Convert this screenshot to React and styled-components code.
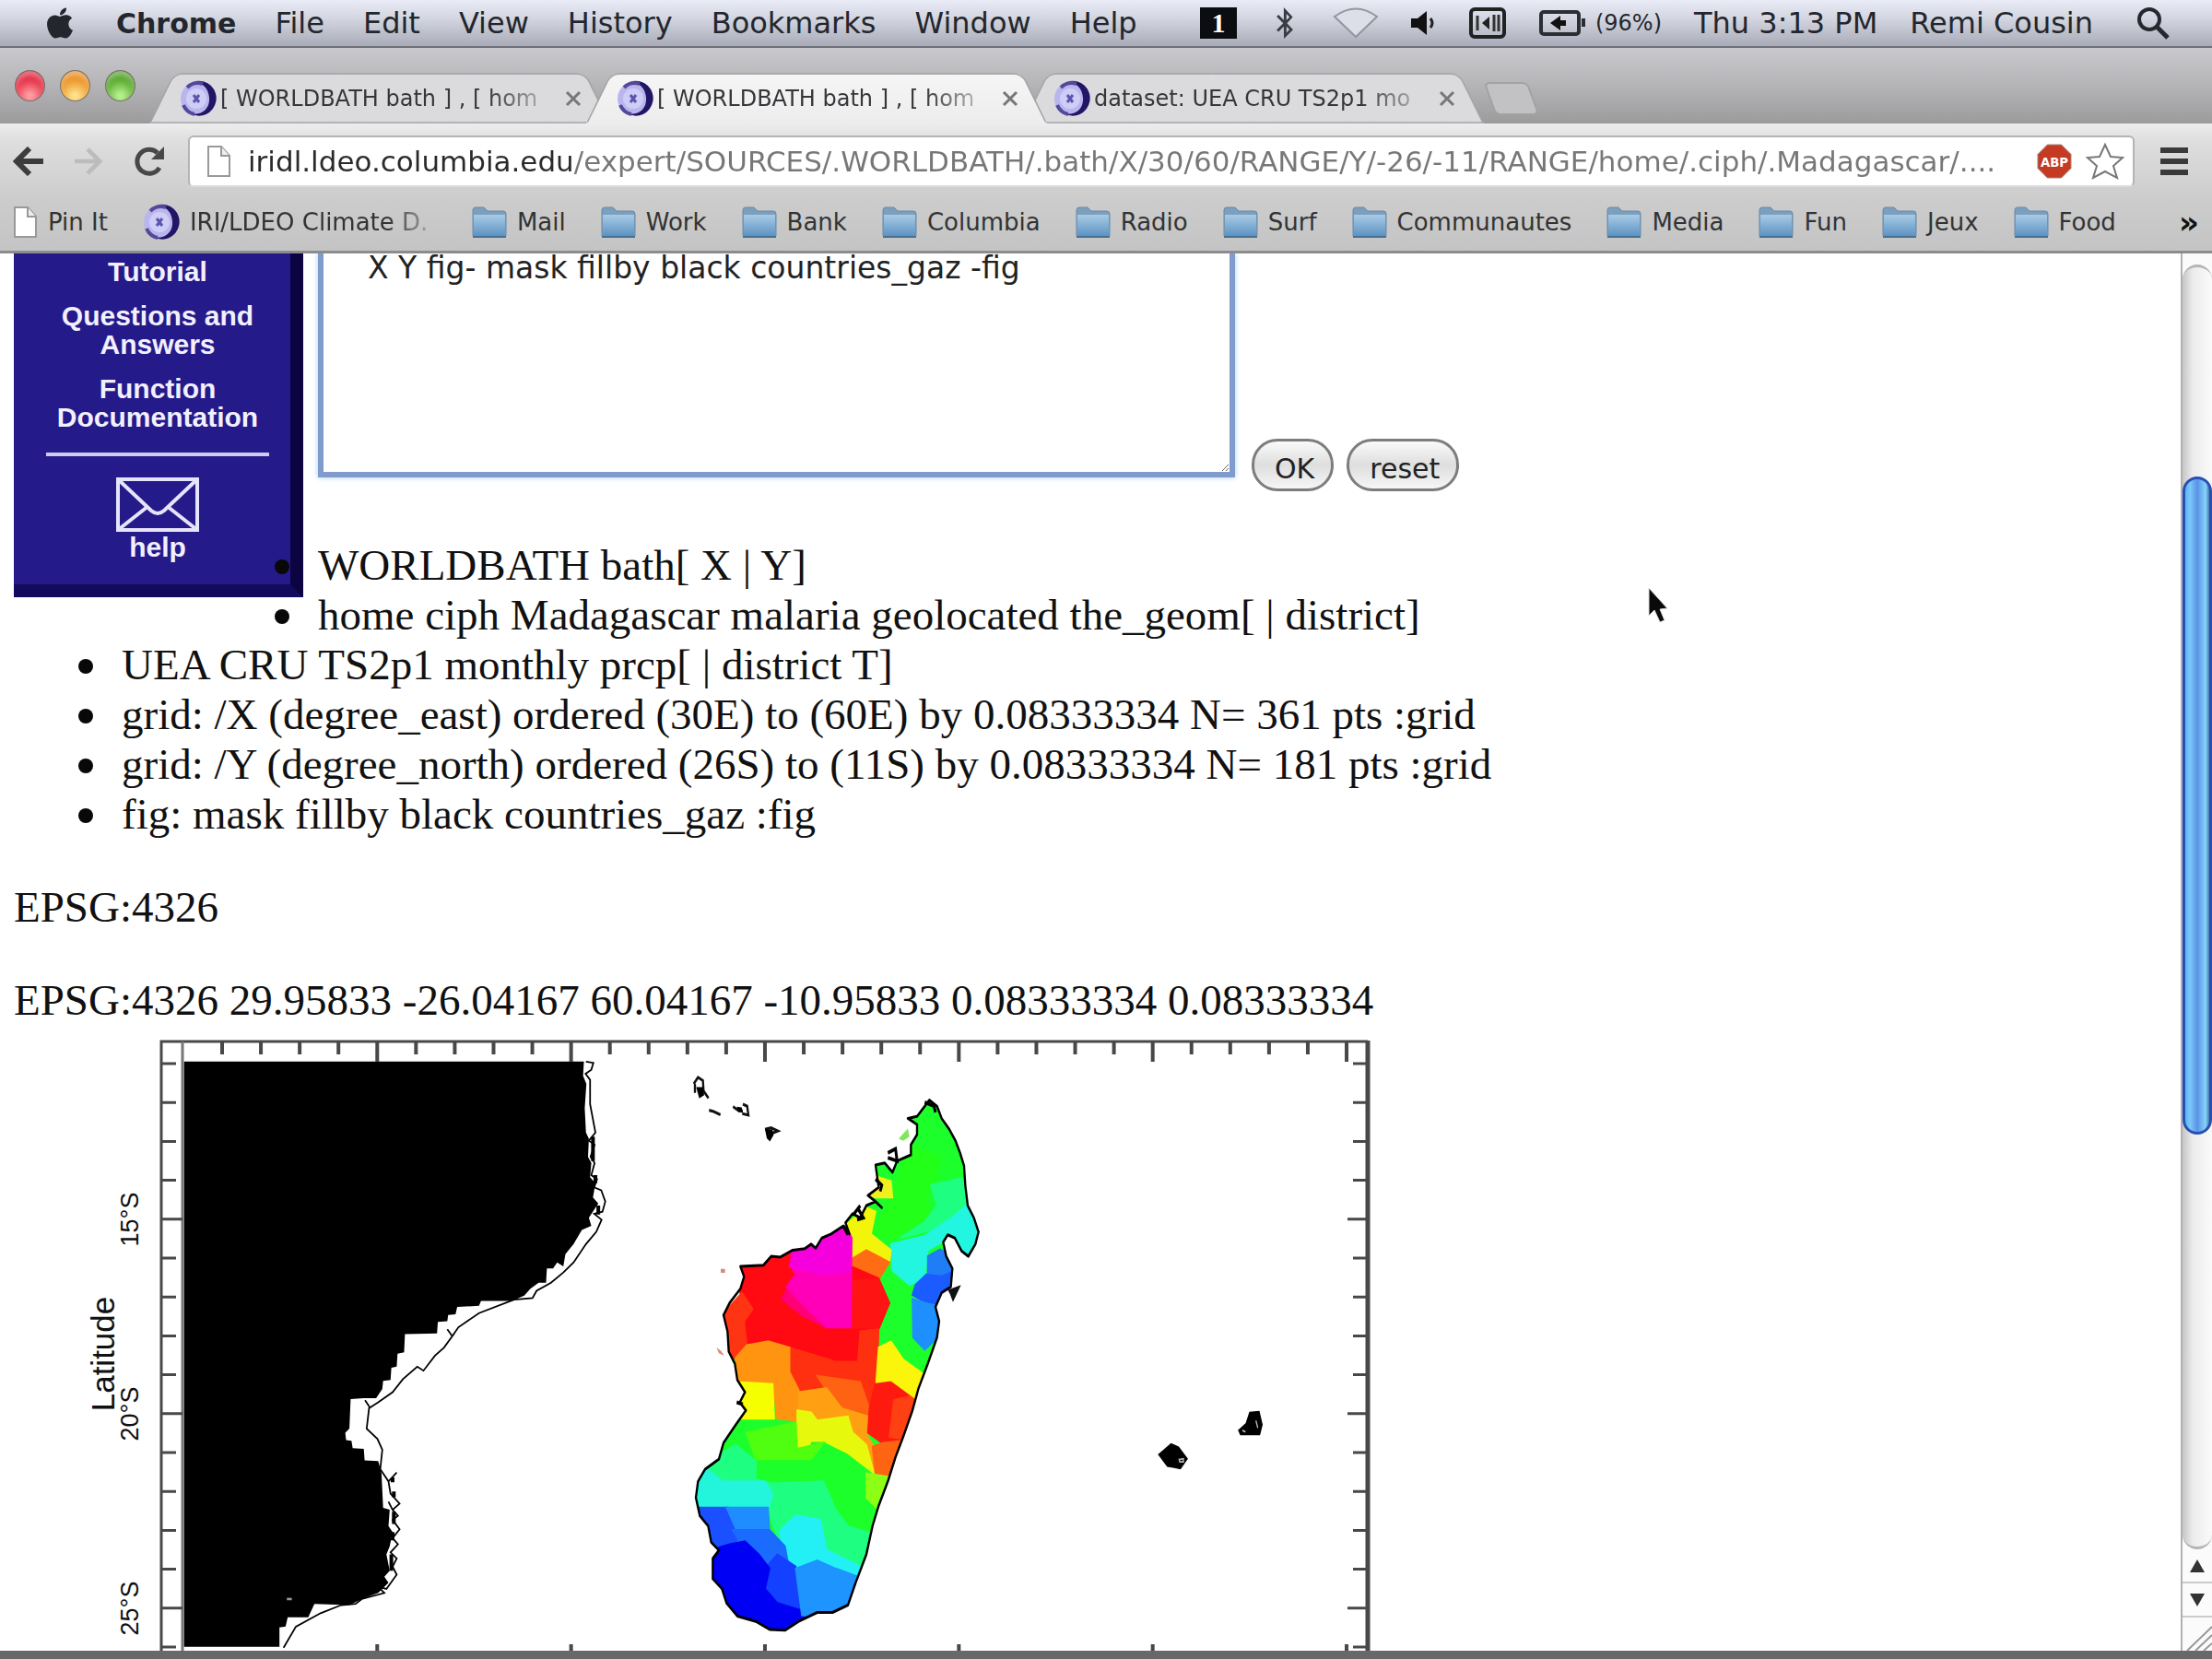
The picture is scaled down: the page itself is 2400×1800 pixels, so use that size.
import React, { useState } from 'react';
import styled, { createGlobalStyle } from 'styled-components';
import { FaApple, FaBluetoothB } from 'react-icons/fa';

const MENUS = ['File', 'Edit', 'View', 'History', 'Bookmarks', 'Window', 'Help'];

const TABS = [
  { id: 1, title: '[ WORLDBATH bath ] , [ hom' },
  { id: 2, title: '[ WORLDBATH bath ] , [ hom', active: true },
  { id: 3, title: 'dataset: UEA CRU TS2p1 mo' },
];

const FOLDERS = [
  'Mail',
  'Work',
  'Bank',
  'Columbia',
  'Radio',
  'Surf',
  'Communautes',
  'Media',
  'Fun',
  'Jeux',
  'Food',
];

const DATASETS = [
  'WORLDBATH bath[ X | Y]',
  'home ciph Madagascar malaria geolocated the_geom[ | district]',
  'UEA CRU TS2p1 monthly prcp[ | district T]',
  'grid: /X (degree_east) ordered (30E) to (60E) by 0.08333334 N= 361 pts :grid',
  'grid: /Y (degree_north) ordered (26S) to (11S) by 0.08333334 N= 181 pts :grid',
  'fig: mask fillby black countries_gaz :fig',
];

const ISLAND =
  'M865 190 L890 205 905 235 930 262 950 290 965 320 978 352 982 400 990 450 1010 480 1025 515 1015 545 992 575 970 562 948 530 925 522 910 540 920 575 940 605 935 650 905 665 885 700 897 735 890 775 860 840 830 900 810 955 780 1020 755 1070 730 1130 700 1190 680 1240 660 1310 625 1380 600 1435 550 1453 500 1453 440 1475 395 1497 345 1495 300 1475 240 1462 205 1430 190 1395 160 1370 160 1320 180 1300 155 1280 145 1240 118 1215 105 1170 112 1130 135 1100 180 1075 195 1035 235 990 268 955 248 935 265 910 240 880 232 840 212 810 208 760 195 720 215 690 250 655 262 625 250 600 325 597 350 575 380 577 420 560 460 556 480 545 495 555 515 530 545 520 585 500 605 520 592 492 615 470 640 480 660 450 690 440 710 455 690 440 665 425 700 405 690 350 720 345 745 368 760 340 805 325 805 300 825 275 825 250 795 235 825 230 Z';

const DISTRICTS = [
  { fill: '#1cff2a', d: 'M560 160H1060V680L800 1500H90V1000L560 400Z' },
  { fill: '#22ff18', d: 'M740 430L800 300 900 330 880 400 850 430 870 480 740 530 680 520Z' },
  { fill: '#1eff82', d: 'M870 400L985 380 1000 450 920 500 770 530 850 490 890 450Z' },
  { fill: '#22f5e0', d: 'M1000 440L1040 515 992 590 940 525 905 540 860 560 850 630 800 645 745 610 740 545 850 525 940 480Z' },
  { fill: '#1f7df5', d: 'M860 575L900 558 930 570 945 610 905 625 860 620Z' },
  { fill: '#1a5cff', d: 'M855 620L905 625 950 610 940 660 885 702 860 692 810 670 820 645Z' },
  { fill: '#1e8fff', d: 'M810 680L860 692 905 700 900 770 850 805 812 775Z' },
  { fill: '#f0f020', d: 'M640 365L740 390 745 430 690 430 650 420Z' },
  { fill: '#f2f50a', d: 'M590 500L660 455 690 465 675 520 740 560 735 590 660 570 610 585Z' },
  { fill: '#ff6c14', d: 'M605 585L660 560 735 590 700 632 608 640Z' },
  { fill: '#ff0a12', d: 'M240 590L420 550 450 600 610 600 700 630 735 690 700 755 640 765 630 835 560 840 420 800 340 785 262 790 250 670Z' },
  { fill: '#ff1414', d: 'M610 635L700 632 735 690 700 750 612 750Z' },
  { fill: '#ff0078', d: 'M385 680L430 620 480 640 530 750 450 720Z' },
  { fill: '#ff00b8', d: 'M415 560L515 525 590 495 612 530 610 750 530 750 450 690 400 650 430 620 415 600Z' },
  { fill: '#f500dc', d: 'M430 560L515 525 590 495 612 530 608 612 520 620 410 600Z' },
  { fill: '#ff3412', d: 'M190 720L255 665 290 705 262 735 270 790 240 830 200 810Z' },
  { fill: '#ff3010', d: 'M410 800L560 835 632 835 640 760 700 755 695 885 670 960 600 960 500 900 440 910 410 860Z' },
  { fill: '#ff9410', d: 'M235 825L270 795 340 785 410 800 410 860 440 905 435 980 370 975 355 890 240 888Z' },
  { fill: '#ff6212', d: 'M500 870L640 885 670 950 665 1010 580 990 530 905Z' },
  { fill: '#ffa012', d: 'M440 910L530 900 580 950 665 970 665 1020 690 1050 685 1100 600 1000 440 960Z' },
  { fill: '#f5ff00', d: 'M240 885L355 890 360 975 240 975Z' },
  { fill: '#e6f80c', d: 'M435 955L480 960 500 980 600 970 615 1010 660 1040 685 1110 600 1060 520 1030 480 1030 470 1050 435 1050Z' },
  { fill: '#ff1a10', d: 'M690 885L740 880 830 925 770 1045 720 1040 665 1010 670 950Z' },
  { fill: '#ff4012', d: 'M750 930L830 915 780 1025 735 1020Z' },
  { fill: '#ff6412', d: 'M680 1045L715 1035 780 1030 730 1125 690 1115Z' },
  { fill: '#faf50a', d: 'M700 800L740 785 780 830 850 868 830 930 740 880 692 885Z' },
  { fill: '#50ff10', d: 'M270 1010L430 985 435 1050 520 1035 480 1075 300 1075Z' },
  { fill: '#8cff14', d: 'M660 1110L740 1120 700 1200 660 1170Z' },
  { fill: '#1eff82', d: 'M100 1100L235 1040 300 1080 300 1125 350 1135 520 1130 560 1200 600 1240 680 1260 640 1390 400 1330 340 1200Z' },
  { fill: '#22f5dc', d: 'M90 1120L135 1095 190 1130 330 1130 355 1160 340 1200 90 1200Z' },
  { fill: '#22f0f5', d: 'M380 1250L430 1215 510 1225 530 1300 640 1340 630 1390 560 1355 500 1335 390 1340Z' },
  { fill: '#1a50ff', d: 'M90 1195L210 1195 240 1260 240 1300 140 1310Z' },
  { fill: '#1f8cff', d: 'M205 1195H340L345 1255 300 1270 240 1255Z' },
  { fill: '#1a6cff', d: 'M225 1250L345 1250 395 1290 410 1350 330 1360 265 1300Z' },
  { fill: '#1440ff', d: 'M330 1345L370 1310 430 1340 455 1480 330 1420Z' },
  { fill: '#0000f5', d: 'M150 1300L215 1285 265 1278 310 1310 345 1345 330 1395 370 1430 500 1460 340 1510 150 1420Z' },
  { fill: '#1e94ff', d: 'M430 1345L500 1325 560 1345 650 1370 600 1470 450 1460Z' },
];

const xTicks = Array.from({ length: 30 }, (_, i) => ({ at: 241 + i * 42.07, major: i % 5 === 4 }));
const yTicks = Array.from({ length: 16 }, (_, i) => ({ at: 1154 + i * 42.2, major: i % 5 === 4 }));

const Favicon = () => (
  <svg width="40" height="42" viewBox="0 0 40 42">
    <circle cx="19" cy="21" r="18" fill="#b9b6ee" />
    <path d="M17 2a19 19 0 1 1-6 35c13 3 22-5 21-17C31 10 26 5 17 2Z" fill="#231566" />
    <path d="M8 9a17 17 0 0 1 17-4M4 28a17 17 0 0 0 12 10" stroke="#54489c" strokeWidth="4" fill="none" />
    <circle cx="18" cy="21" r="11" fill="#cfcdf8" />
    <path d="M15 17l6 8M21 17l-6 8" stroke="#5d55ac" strokeWidth="3" />
  </svg>
);

const Folder = () => (
  <svg width="38" height="36" viewBox="0 0 38 36">
    <defs>
      <linearGradient id="folder" x1="0" y1="0" x2="0" y2="1">
        <stop offset="0" stopColor="#a9cbe6" />
        <stop offset="1" stopColor="#5c93c2" />
      </linearGradient>
    </defs>
    <path d="M1 33V5q0-3 3-3h9l4 4h17q3 0 3 3v24Z" fill="#7c9fbd" stroke="#678aab" strokeWidth="1" />
    <path d="M2 10h34v23H2Z" fill="url(#folder)" />
    <path d="M1 34h36" stroke="#466f94" strokeWidth="2" />
  </svg>
);

const PageIcon = () => (
  <svg width="27" height="36" viewBox="0 0 27 36">
    <path d="M2 2h14l9 10v22H2Z" fill="#fff" stroke="#999" strokeWidth="2" />
    <path d="M16 2v10h9" fill="#eee" stroke="#999" strokeWidth="2" />
  </svg>
);

const MenuBar = () => (
  <MenuRow>
    <FaApple size={38} />
    <AppMenu>Chrome</AppMenu>
    {MENUS.map((name) => (
      <button key={name}>{name}</button>
    ))}
    <Status>
      <Space>1</Space>
      <FaBluetoothB size={34} color="#3a3c44" />
      <svg width="50" height="34" viewBox="0 0 50 34">
        <path d="M2 10Q25-7 48 10L25 32Z" fill="#dcdfe8" stroke="#93969e" strokeWidth="2" />
      </svg>
      <svg width="28" height="28" viewBox="0 0 28 28">
        <path d="M0 9h7l10-8v26L7 19H0Z" fill="#111" />
        <path d="M21 9q4 5 0 10" fill="none" stroke="#222" strokeWidth="3" />
      </svg>
      <svg width="40" height="34" viewBox="0 0 40 34">
        <rect x="2" y="2" width="36" height="30" rx="4" fill="none" stroke="#222" strokeWidth="4" />
        <path d="M9 9v16M16 17h6M32 8v18M27 8v18" stroke="#333" strokeWidth="3" />
        <path d="M14 17l8-7v14Z" fill="#222" />
      </svg>
      <Battery>
        <svg width="52" height="30" viewBox="0 0 52 30">
          <rect x="3" y="3" width="41" height="24" rx="3" fill="none" stroke="#2c2e35" strokeWidth="4" />
          <path d="M49 10v9" stroke="#2c2e35" strokeWidth="4" />
          <path d="M13 15l11-8v5h6v6h-6v5Z" fill="#111" />
        </svg>
        (96%)
      </Battery>
      <span>Thu 3:13 PM</span>
      <span>Remi Cousin</span>
      <Spotlight aria-label="Spotlight">
        <svg width="36" height="36" viewBox="0 0 36 36">
          <circle cx="14" cy="14" r="11" fill="none" stroke="#26282f" strokeWidth="4" />
          <path d="M22 22l12 12" stroke="#26282f" strokeWidth="5" />
        </svg>
      </Spotlight>
    </Status>
  </MenuRow>
);

const TabStrip = () => (
  <Strip>
    <Light $color="#e0233a" $glow="#ff9aa0" aria-label="Close" />
    <Light $color="#e88b1c" $glow="#ffe08a" aria-label="Minimize" />
    <Light $color="#4e9f22" $glow="#b4ee8a" aria-label="Zoom" />
    <TabList>
      {TABS.map((tab) => (
        <Tab key={tab.id} $active={tab.active}>
          <Favicon />
          <TabTitle>{tab.title}</TabTitle>
          <CloseTab aria-label="Close tab">
            <svg width="18" height="18" viewBox="0 0 18 18">
              <path d="M2 2l14 14M16 2L2 16" stroke="#77777b" strokeWidth="3" />
            </svg>
          </CloseTab>
        </Tab>
      ))}
    </TabList>
    <NewTab aria-label="New tab" />
  </Strip>
);

const Toolbar = () => {
  const [url, setUrl] = useState(
    'iridl.ldeo.columbia.edu/expert/SOURCES/.WORLDBATH/.bath/X/30/60/RANGE/Y/-26/-11/RANGE/home/.ciph/.Madagascar/....',
  );

  return (
    <ToolbarRow>
      <IconButton aria-label="Back">
        <svg width="34" height="32" viewBox="0 0 34 32">
          <path d="M33 16H5M18 2L4 16l14 14" fill="none" stroke="#3c3c3c" strokeWidth="6" />
        </svg>
      </IconButton>
      <IconButton aria-label="Forward">
        <svg width="32" height="32" viewBox="0 0 34 32">
          <path d="M1 16h28M16 2l14 14-14 14" fill="none" stroke="#bcbcbc" strokeWidth="5" />
        </svg>
      </IconButton>
      <IconButton aria-label="Reload">
        <svg width="36" height="34" viewBox="0 0 36 34">
          <path d="M29 24A13 13 0 1 1 27 8" fill="none" stroke="#484848" strokeWidth="5" />
          <path d="M34 1v14H20Z" fill="#484848" />
        </svg>
      </IconButton>
      <AddressBar>
        <PageIcon />
        <Address aria-label="Address" value={url} onChange={(e) => setUrl(e.target.value)} />
        <IconButton aria-label="AdBlock Plus">
          <svg width="38" height="40" viewBox="0 0 40 40">
            <path d="M12 1h16l11 11v16L28 39H12L1 28V12Z" fill="#c43a22" stroke="#a9938c" strokeWidth="1" />
            <text x="20" y="26" textAnchor="middle" fontSize="14" fontWeight="700" fill="#fff">
              ABP
            </text>
          </svg>
        </IconButton>
        <IconButton aria-label="Bookmark this page">
          <svg width="44" height="42" viewBox="0 0 44 42">
            <path
              d="M22 3l6 13 13 1-10 9 4 13-13-7-13 7 4-13L3 17l13-1Z"
              fill="#fff"
              stroke="#777"
              strokeWidth="2"
            />
          </svg>
        </IconButton>
      </AddressBar>
      <IconButton aria-label="Menu">
        <svg width="30" height="32" viewBox="0 0 30 32">
          <path d="M0 4h30M0 16h30M0 28h30" stroke="#3a3a3a" strokeWidth="6" />
        </svg>
      </IconButton>
    </ToolbarRow>
  );
};

const BookmarksBar = () => (
  <BookmarksRow>
    <Bookmark href="#pin">
      <PageIcon />
      Pin It
    </Bookmark>
    <Bookmark href="#iri">
      <Favicon />
      <Faded>IRI/LDEO Climate D.</Faded>
    </Bookmark>
    {FOLDERS.map((name) => (
      <Bookmark key={name} href={`#${name}`}>
        <Folder />
        {name}
      </Bookmark>
    ))}
    <More aria-label="More bookmarks">»</More>
  </BookmarksRow>
);

const Plot = () => (
  <PlotImage viewBox="15 1112 1485 679" role="img" aria-label="Map of Madagascar by district">
    <clipPath id="island">
      <path d={ISLAND} />
    </clipPath>
    <g transform="translate(80 1110) scale(.4464 .4401)" fill="none" stroke="#000" strokeWidth="4">
      <path
        d="M268 95 L1240 95 1238 130 1246 150 1242 210 1245 270 1252 285 1250 330 1258 345 1255 380 1268 395 1262 430 1275 445 1252 480 1258 500 1235 510 1215 545 1195 570 1190 600 1175 590 1165 605 1150 605 1148 640 1130 640 1110 655 1095 672 1065 685 990 685 985 697 932 700 928 718 910 720 908 735 885 737 883 765 805 767 803 812 787 815 785 847 772 850 770 880 752 882 750 902 735 925 705 925 673 927 670 1000 660 1010 662 1028 675 1030 678 1048 705 1050 707 1078 740 1080 748 1110 752 1195 768 1200 765 1240 775 1255 768 1290 760 1310 768 1350 755 1365 765 1380 740 1405 700 1420 670 1435 585 1432 570 1465 520 1465 515 1488 500 1490 500 1538 268 1538Z"
        fill="#000"
        stroke="none"
      />
      <path d="M1245 95L1263 98 1258 115 1244 125 1255 140V200L1268 270 1252 290 1266 300 1256 330 1266 345 1258 375 1272 385 1265 405 1282 412 1292 440 1285 465 1265 470 1283 485 1270 515 1245 545 1215 590 1190 615 1160 640 1125 660 1115 678 1070 682 985 715 935 750 920 772 908 755M925 765L900 800 878 820 850 857 835 847 800 878 775 910 740 935 720 948 708 930M718 948L712 1000 738 1025 750 1052 745 1100 765 1130 785 1108M765 1130L770 1160 792 1185 775 1200 765 1180M775 1200L788 1215 775 1225 792 1248 775 1270 788 1285 770 1305 785 1320 775 1340 785 1360 760 1395 740 1390 755 1405 700 1420 685 1432 650 1435 600 1455 540 1488 510 1540" />
      <path d="M1262 280v60M1268 375v20M1275 450v22M775 1120v12M778 1155v14M778 1205v30M775 1255v20M772 1310v40" strokeWidth="9" />
      <path d="M518 1420h12" stroke="#999" strokeWidth="6" />
    </g>
    <g transform="translate(720 1110) scale(.33333 .4401)">
      <g clipPath="url(#island)">
        {DISTRICTS.map((district) => (
          <path key={district.d} d={district.d} fill={district.fill} stroke={district.fill} strokeWidth="5" />
        ))}
      </g>
      <path d={ISLAND} fill="none" stroke="#000" strokeWidth="7" strokeLinejoin="round" />
      <path
        d="M850 195l30 10 5 15M690 385l20 15-5 15M635 460l15 20-20 5M585 500l15 22M730 320l25-10 5 30-30-8M620 470l20-20M238 935l20 5"
        fill="none"
        stroke="#000"
        strokeWidth="9"
      />
      <path d="M925 658l43-12-26 42-10-20Z" fill="#111" />
      <path d="M765 285l30-25 5 20-20 10Z" fill="#7ee85c" />
      <path d="M186 606h14v10h-14ZM172 800l14 8 12 12-18-6Z" fill="#d88a7a" />
      <path
        d="M98 150l14-16 16 8 2 25 16 18M102 150v22M148 215l15 3 22 8M226 206l18 10 14 2M258 200l14 5 4 22-20-4M330 262l20-4 22 8-20 6"
        fill="none"
        stroke="#111"
        strokeWidth="7"
      />
      <path d="M106 158h22l4 20-16 8ZM238 206l16 2 4 10-14 2ZM330 262h24l4 14-12 16-10-8Z" fill="#000" />
    </g>
    <g transform="translate(1100 1110) scale(.33333 .4401)" stroke="#000" strokeWidth="4">
      <path d="M472 1064l40-26 24 8 28 28-22 24-42-6Z" />
      <path d="M732 1004l24-16 12-28 30-2 10 32-8 24h-62Z" />
      <path d="M538 1076l14-2v8h-12ZM788 980l6 18M744 1004l10 4" stroke="#bbb" fill="none" />
    </g>
    <g stroke="#484848" strokeWidth="3" fill="none">
      <path d="M175 1791V1130H1484" />
      <path d="M1484 1129V1791" strokeWidth="5" />
      <path d="M198 1130V1791" stroke="#777" />
      {xTicks.map((t) => (
        <path key={t.at} d={`M${t.at} 1130v${t.major ? 22 : 14}${t.major ? `M${t.at} 1784v8` : ''}`} strokeWidth="4" />
      ))}
      {yTicks.map((t) => (
        <path key={t.at} d={`M175 ${t.at}h${t.major ? 23 : 16}M1484 ${t.at}h${t.major ? -22 : -16}`} />
      ))}
    </g>
    <g fontSize="27" textAnchor="middle" fill="#111">
      <text transform="translate(150 1323) rotate(-90)">15°S</text>
      <text transform="translate(150 1534) rotate(-90)">20°S</text>
      <text transform="translate(150 1745) rotate(-90)">25°S</text>
      <text transform="translate(124 1469) rotate(-90)" fontSize="35">
        Latitude
      </text>
    </g>
  </PlotImage>
);

const App = () => {
  const [query, setQuery] = useState('X Y fig- mask fillby black countries_gaz -fig');

  return (
    <Screen>
      <GlobalStyle />
      <MenuBar />
      <TabStrip />
      <Toolbar />
      <BookmarksBar />
      <Viewport>
        <Page>
          <Sidebar>
            <SideLink href="#tutorial">Tutorial</SideLink>
            <SideLink href="#questions">Questions and Answers</SideLink>
            <SideLink href="#functions">Function Documentation</SideLink>
            <SideRule />
            <HelpLink href="#help">
              <svg width="92" height="60" viewBox="0 0 92 60">
                <path
                  d="M3 2h86v55H3ZM3 2l36 34q7 6 14 0L89 2M3 57l33-26M89 57L56 31"
                  fill="none"
                  stroke="#e6e4fa"
                  strokeWidth="4"
                />
              </svg>
              help
            </HelpLink>
          </Sidebar>
          <ExpertForm onSubmit={(e) => e.preventDefault()}>
            <Editor aria-label="Expert mode" value={query} onChange={(e) => setQuery(e.target.value)} />
            <FormButton type="submit">OK</FormButton>
            <FormButton type="button" onClick={() => setQuery('')}>
              reset
            </FormButton>
          </ExpertForm>
          <Datasets>
            {DATASETS.map((text) => (
              <li key={text}>{text}</li>
            ))}
          </Datasets>
          <Projection>EPSG:4326</Projection>
          <Projection>EPSG:4326 29.95833 -26.04167 60.04167 -10.95833 0.08333334 0.08333334</Projection>
          <Plot />
        </Page>
        <Scrollbar>
          <Track>
            <Thumb />
          </Track>
          <Arrow aria-label="Scroll up">
            <svg width="16" height="14" viewBox="0 0 16 14">
              <path d="M8 0l8 14H0Z" fill="#333" />
            </svg>
          </Arrow>
          <Arrow aria-label="Scroll down">
            <svg width="16" height="14" viewBox="0 0 16 14">
              <path d="M8 14l8-14H0Z" fill="#333" />
            </svg>
          </Arrow>
          <Grip width="28" height="28" viewBox="0 0 28 28">
            <path d="M1 28L28 2M10 28L28 11M19 28l9-8" stroke="#999" strokeWidth="2" />
          </Grip>
        </Scrollbar>
        <Cursor width="26" height="44" viewBox="0 0 26 44">
          <path d="M2 2v30l6-6 6 13 5-2-5-12 8-1Z" fill="#0a0a0a" stroke="#ddd" strokeWidth="1" />
        </Cursor>
      </Viewport>
      <WindowEdge />
    </Screen>
  );
};

const GlobalStyle = createGlobalStyle`
  body {
    margin: 0;
    background: #fff;
  }

  button {
    padding: 0;
    border: 0;
    background: none;
    color: inherit;
    font: inherit;
  }

  svg {
    flex: none;
    display: block;
  }
`;

const Screen = styled.div`
  display: flex;
  flex-direction: column;
  height: 100vh;
  overflow: hidden;
  font-family: 'DejaVu Sans', Verdana, sans-serif;
`;

const MenuRow = styled.header`
  display: flex;
  align-items: center;
  gap: 42px;
  height: 50px;
  padding: 0 46px;
  border-bottom: 2px solid #6f717a;
  background: linear-gradient(#e9ecf6, #d3d6e0 40%, #a9acb8);
  color: #24262d;
  font-size: 32px;
  white-space: nowrap;
`;

const AppMenu = styled.button`
  && {
    font-size: 30px;
    font-weight: 700;
  }
`;

const Status = styled.div`
  display: flex;
  flex: 1;
  align-items: center;
  justify-content: flex-end;
  gap: 35px;
`;

const Space = styled.span`
  width: 40px;
  background: #0c0d11;
  color: #fff;
  font-family: 'Liberation Serif', serif;
  font-size: 30px;
  font-weight: 700;
  line-height: 34px;
  text-align: center;
`;

const Battery = styled.span`
  display: flex;
  align-items: center;
  gap: 10px;
  font-size: 24px;
`;

const Spotlight = styled.button`
  && {
    padding-left: 12px;
  }
`;

const Strip = styled.div`
  display: flex;
  align-items: flex-end;
  gap: 16px;
  height: 82px;
  padding-left: 16px;
  background: linear-gradient(#c9c9cd, #b4b4b7 50%, #9b9b9c);
`;

const Light = styled.button`
  && {
    width: 33px;
    height: 34px;
    margin-bottom: 24px;
    border: 1px solid #77716e;
    border-radius: 50%;
    background: radial-gradient(circle at 50% 85%, ${(props) => props.$glow} 8%, ${(props) => props.$color} 65%);
    box-shadow: inset 0 6px 5px rgba(255, 255, 255, 0.35);
  }
`;

const TabList = styled.div`
  display: flex;
  gap: 26px;
  margin-left: 25px;
`;

const Tab = styled.div`
  position: relative;
  z-index: ${(props) => (props.$active ? 2 : 0)};
  display: flex;
  align-items: center;
  width: 448px;
  height: 55px;
  isolation: isolate;

  &::before,
  &::after {
    content: '';
    position: absolute;
    z-index: -1;
    top: 0;
    bottom: 0;
    width: 60%;
    border-top: 2px solid #aaaaad;
    border-bottom: 2px solid ${(props) => (props.$active ? '#ededed' : '#b2b2b4')};
    background: ${(props) => (props.$active ? 'linear-gradient(#f5f5f5, #ededed)' : '#dbdbdd')};
    box-sizing: border-box;
  }

  &::before {
    left: -13px;
    border-left: 2px solid #a5a5a8;
    border-top-left-radius: 10px;
    transform: skewX(-26deg);
  }

  &::after {
    right: -13px;
    border-right: 2px solid #a5a5a8;
    border-top-right-radius: 10px;
    transform: skewX(26deg);
  }

  > svg {
    margin-left: 7px;
  }
`;

const TabTitle = styled.span`
  width: 362px;
  margin-left: 4px;
  color: #36363a;
  font-size: 24px;
  white-space: nowrap;
  mask-image: linear-gradient(90deg, #000 80%, rgba(0, 0, 0, 0.2) 98%);
`;

const CloseTab = styled.button`
  && {
    margin-left: 12px;
  }
`;

const NewTab = styled.button`
  && {
    width: 48px;
    height: 36px;
    margin: 0 0 9px 16px;
    border: 2px solid #a2a2a4;
    border-radius: 6px;
    background: #c2c2c4;
    transform: skewX(20deg);
  }
`;

const ToolbarRow = styled.div`
  display: flex;
  align-items: center;
  gap: 32px;
  height: 70px;
  padding: 6px 26px 0 14px;
  background: linear-gradient(#ededed, #dedede 25%, #cecece);
`;

const IconButton = styled.button`
  display: flex;
`;

const AddressBar = styled.div`
  display: flex;
  flex: 1;
  align-items: center;
  gap: 14px;
  height: 56px;
  margin: 0 -4px 0 -8px;
  padding: 0 8px 0 18px;
  border: 2px solid #b4b4b4;
  border-bottom-color: #dcdcdc;
  border-radius: 6px;
  background: #fff;
  box-sizing: border-box;
`;

const Address = styled.input`
  flex: 1;
  min-width: 0;
  padding: 0 0 0 4px;
  border: 0;
  outline: 0;
  background: linear-gradient(90deg, #2a2a2a 358px, #777 358px);
  background-clip: text;
  color: transparent;
  font-family: inherit;
  font-size: 31px;
`;

const BookmarksRow = styled.nav`
  display: flex;
  align-items: center;
  gap: 38px;
  height: 62px;
  padding: 0 14px;
  border-bottom: 3px solid #8c8c8c;
  background: linear-gradient(#cdcdcd, #c4c4c4);
  color: #333;
  font-size: 26px;
  white-space: nowrap;
`;

const Bookmark = styled.a`
  display: flex;
  align-items: center;
  gap: 11px;
  color: inherit;
  text-decoration: none;
`;

const Faded = styled.span`
  width: 268px;
  mask-image: linear-gradient(90deg, #000 80%, rgba(0, 0, 0, 0.2) 98%);
`;

const More = styled.button`
  && {
    margin-left: auto;
    color: #111;
    font-size: 34px;
    font-weight: 700;
    line-height: 40px;
  }
`;

const Viewport = styled.div`
  position: relative;
  display: flex;
  flex: 1;
  min-height: 0;
`;

const Page = styled.main`
  flex: 1;
  min-width: 0;
  padding-left: 15px;
  overflow: hidden;
  background: #fff;
  color: #111;
  font-family: 'Liberation Serif', 'Times New Roman', serif;
  font-size: 47px;
  line-height: 54px;
`;

const Sidebar = styled.aside`
  float: left;
  display: flex;
  flex-direction: column;
  align-items: center;
  gap: 17px;
  width: 314px;
  height: 373px;
  margin-right: 16px;
  padding: 4px 20px 0;
  border: solid #0b0440;
  border-width: 0 14px 14px 0;
  border-bottom-color: #120a5c;
  background: #251a8a;
  box-sizing: border-box;
  font-family: 'Liberation Sans', Arial, sans-serif;
  font-size: 30px;
  font-weight: 700;
  line-height: 31px;
  text-align: center;
`;

const SideLink = styled.a`
  margin-left: 12px;
  color: #f2f0ff;
  text-decoration: none;
`;

const SideRule = styled.hr`
  width: 242px;
  height: 4px;
  margin: 6px 0 6px 12px;
  border: 0;
  background: #cfcbf0;
`;

const HelpLink = styled(SideLink)`
  display: flex;
  flex-direction: column;
  align-items: center;
`;

const ExpertForm = styled.form`
  display: flex;
  align-items: flex-end;
  gap: 14px;
  margin-bottom: 53px;
`;

const Editor = styled.textarea`
  width: 995px;
  height: 243px;
  margin: 0 4px 15px 0;
  padding: 0 48px;
  border: 6px solid #7f9ccc;
  border-top: 0;
  outline: 0;
  box-shadow: 0 0 6px #a8cdf0;
  box-sizing: border-box;
  background: #fff;
  color: #222;
  font-family: 'DejaVu Sans', Verdana, sans-serif;
  font-size: 33px;
  line-height: 32px;
`;

const FormButton = styled.button`
  && {
    height: 57px;
    padding: 8px 18px 0 22px;
    border: 3px solid #7d7d7d;
    border-radius: 28px;
    background: linear-gradient(#fafafa, #dedede 50%, #f6f6f6);
    color: #222;
    font-family: 'DejaVu Sans', Verdana, sans-serif;
    font-size: 30px;
    line-height: 40px;
  }
`;

const Datasets = styled.ul`
  margin: 0 0 47px;
  padding-left: 117px;
  list-style: none;

  li::before {
    content: '';
    display: inline-block;
    width: 16px;
    height: 16px;
    margin: 0 31px 6px -47px;
    border-radius: 50%;
    background: #080808;
  }
`;

const Projection = styled.p`
  margin: 0 0 47px;

  & + & {
    margin-bottom: 0;
  }
`;

const PlotImage = styled.svg`
  width: 1485px;
  height: 679px;
  font-family: 'Liberation Sans', Arial, sans-serif;
`;

const Scrollbar = styled.div`
  display: flex;
  flex-direction: column;
  width: 34px;
  padding-top: 12px;
  border-left: 2px solid #b0b0b0;
  background: #fbfbfb;
  box-sizing: border-box;
`;

const Track = styled.div`
  display: grid;
  flex: 1;
  grid-template-rows: 228fr 716fr 449fr;
  border: solid #b5b5b5;
  border-width: 3px 0;
  border-radius: 16px;
  background: linear-gradient(90deg, #c6c6c6, #ececec 35%, #fafafa);
`;

const Thumb = styled.div`
  grid-row: 2;
  border: 3px solid #2a4fb4;
  border-radius: 16px;
  background: linear-gradient(90deg, #5bb4f4, #7cc8fa 20%, #5b92e6 50%, #84d4fb 85%, #4a78a8);
`;

const Arrow = styled.button`
  && {
    display: flex;
    align-items: center;
    justify-content: center;
    height: 37px;
    border-bottom: 2px solid #ccc;
  }
`;

const Grip = styled.svg`
  margin: 8px 0 0 4px;
`;

const Cursor = styled.svg`
  position: absolute;
  top: 361px;
  left: 1787px;
`;

const WindowEdge = styled.footer`
  height: 9px;
  background: #686868;
`;

export default App;
